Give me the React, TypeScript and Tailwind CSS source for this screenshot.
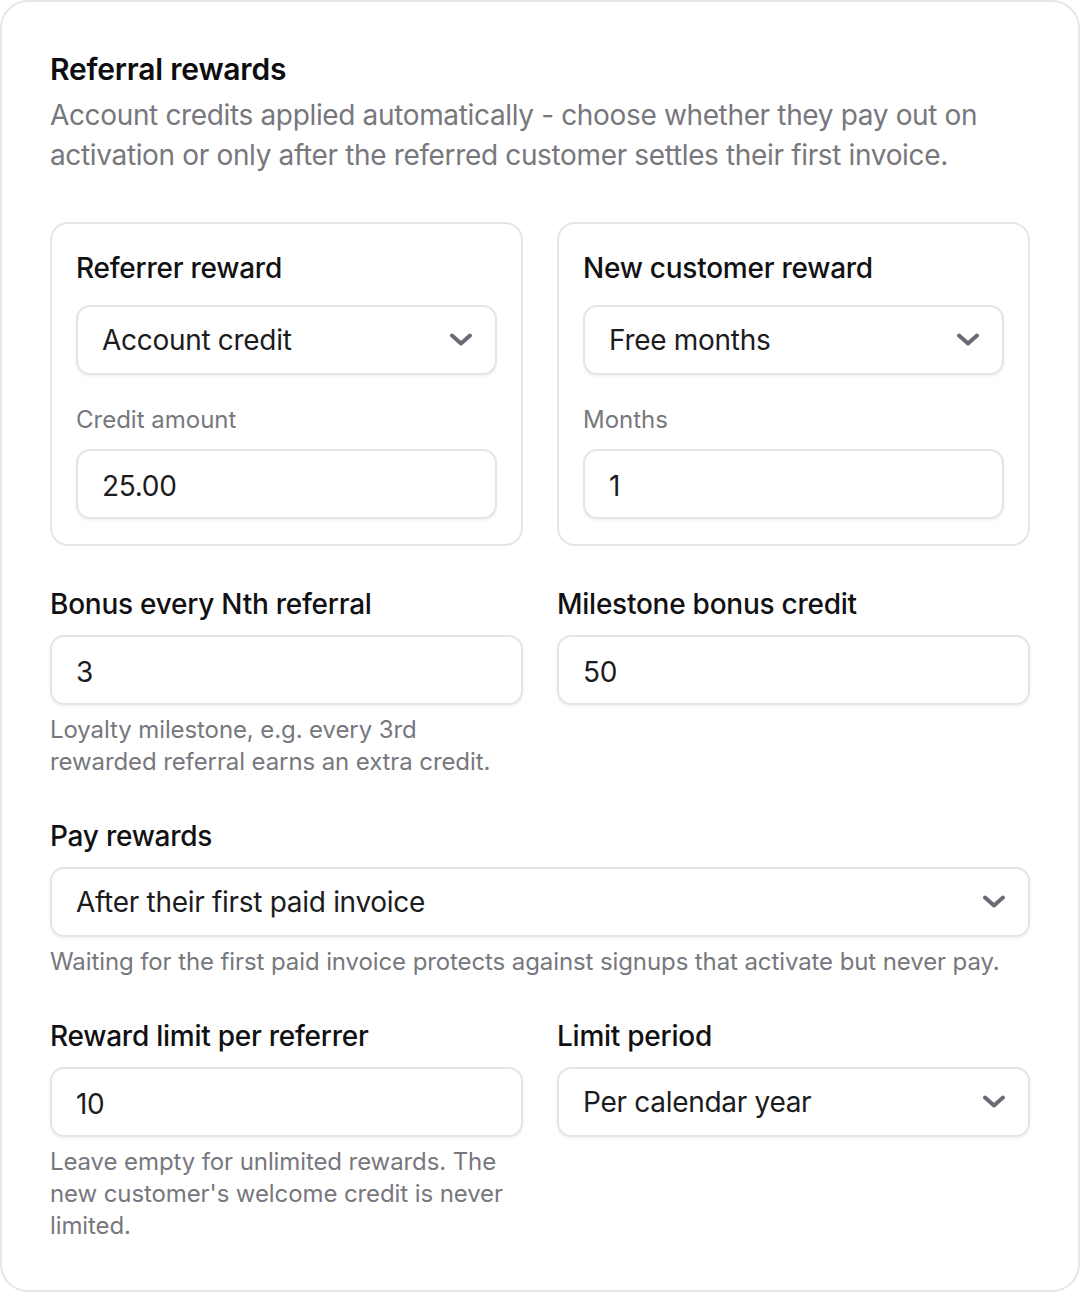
import React from "react";

function Chevron() {
  return (
    <svg width="24" height="14" viewBox="0 0 24 14" fill="none" className="shrink-0">
      <path d="M3 2.5 L12 10.5 L21 2.5" stroke="#6b6b76" strokeWidth="4" strokeLinecap="round" strokeLinejoin="round" />
    </svg>
  );
}

function Select({ value }: { value: string }) {
  return (
    <div className="flex items-center justify-between h-[70px] rounded-[14px] border-2 border-[#e5e5e7] bg-white pl-[24px] pr-[22px] shadow-[0_2px_3px_rgba(0,0,0,0.05)]">
      <span className="text-[28px] leading-[40px] tracking-[-0.3px] text-[#1c1c1e]">{value}</span>
      <Chevron />
    </div>
  );
}

function Input({ value }: { value: string }) {
  return (
    <div className="flex items-center h-[70px] rounded-[14px] border-2 border-[#e5e5e7] bg-white px-[24px] pt-[3px] shadow-[0_2px_3px_rgba(0,0,0,0.05)]">
      <span className="text-[28px] leading-[40px] tracking-[-0.3px] text-[#1c1c1e]">{value}</span>
    </div>
  );
}

function Label({ children }: { children: React.ReactNode }) {
  return <div className="text-[28px] leading-[40px] font-medium tracking-[-0.25px] text-[#111113]">{children}</div>;
}

function Help({ children }: { children: React.ReactNode }) {
  return <p className="mt-[9px] text-[24px] leading-[32px] tracking-[-0.1px] text-[#77777e]">{children}</p>;
}

function RewardCard({ title, select, sub, value }: { title: string; select: string; sub: string; value: string }) {
  return (
    <div className="rounded-[18px] border-2 border-[#e5e5e7] px-[24px] pt-[24px] pb-[25px]">
      <Label>{title}</Label>
      <div className="mt-[17px]">
        <Select value={select} />
      </div>
      <div className="mt-[25px] text-[24px] leading-[40px] text-[#77777e]">{sub}</div>
      <div className="mt-[9px]">
        <Input value={value} />
      </div>
    </div>
  );
}

export default function App() {
  return (
    <div className="w-[1080px] bg-white" style={{ fontFamily: "Inter, 'Noto Sans', sans-serif" }}>
      <div className="h-[1292px] border-2 border-[#e6e6e8] rounded-[28px] px-[48px] pt-[47px] pb-[48px]">
        <h1 className="text-[30px] leading-[40px] font-semibold tracking-[-0.2px] text-[#0d0d0f]">Referral rewards</h1>
        <p className="mt-[6px] text-[28px] leading-[40px] tracking-[-0.35px] text-[#77777e]">
          Account credits applied automatically - choose whether they pay out on activation or only after the referred customer settles their first invoice.
        </p>

        <div className="mt-[47px] grid grid-cols-2 gap-[34px]">
          <RewardCard title="Referrer reward" select="Account credit" sub="Credit amount" value="25.00" />
          <RewardCard title="New customer reward" select="Free months" sub="Months" value="1" />
        </div>

        <div className="mt-[38px] grid grid-cols-2 gap-[34px]">
          <div>
            <Label>Bonus every Nth referral</Label>
            <div className="mt-[11px]">
              <Input value="3" />
            </div>
            <Help>Loyalty milestone, e.g. every 3rd rewarded referral earns an extra credit.</Help>
          </div>
          <div>
            <Label>Milestone bonus credit</Label>
            <div className="mt-[11px]">
              <Input value="50" />
            </div>
          </div>
        </div>

        <div className="mt-[38px]">
          <Label>Pay rewards</Label>
          <div className="mt-[11px]">
            <Select value="After their first paid invoice" />
          </div>
          <Help>Waiting for the first paid invoice protects against signups that activate but never pay.</Help>
        </div>

        <div className="mt-[38px] grid grid-cols-2 gap-[34px]">
          <div>
            <Label>Reward limit per referrer</Label>
            <div className="mt-[11px]">
              <Input value="10" />
            </div>
            <Help>Leave empty for unlimited rewards. The new customer's welcome credit is never limited.</Help>
          </div>
          <div>
            <Label>Limit period</Label>
            <div className="mt-[11px]">
              <Select value="Per calendar year" />
            </div>
          </div>
        </div>
      </div>
    </div>
  );
}
